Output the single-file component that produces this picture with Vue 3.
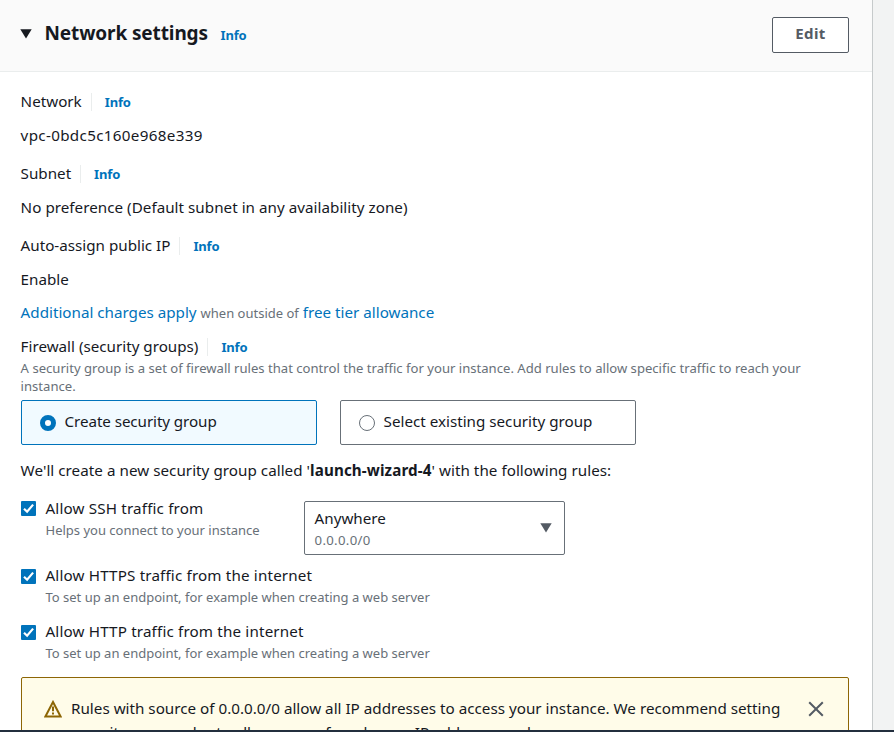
<script setup>
import { ref } from 'vue'

const group = ref('create')
const groups = [
  { id: 'create', label: 'Create security group' },
  { id: 'existing', label: 'Select existing security group' },
]
const webRules = [
  { id: 'https', label: 'Allow HTTPS traffic from the internet' },
  { id: 'http', label: 'Allow HTTP traffic from the internet' },
]
</script>

<template>
  <div class="page">
    <section class="panel">
      <header class="head">
        <svg class="caret" width="12" height="10" viewBox="0 0 12 10"><path d="M.3.3h11.4L6 9.6z" fill="#16191f" /></svg>
        <h2>Network settings</h2>
        <a class="info">Info</a>
        <button class="edit">Edit</button>
      </header>

      <div class="body">
        <div class="label"><span>Network</span><i class="sep"></i><a class="info">Info</a></div>
        <div class="value vpc">vpc-0bdc5c160e968e339</div>
        <div class="label"><span>Subnet</span><i class="sep"></i><a class="info">Info</a></div>
        <div class="value pref">No preference (Default subnet in any availability zone)</div>
        <div class="label"><span>Auto-assign public IP</span><i class="sep"></i><a class="info">Info</a></div>
        <div class="value enable">Enable</div>
        <div class="charges">
          <a>Additional charges apply</a><small>when outside of</small><a>free tier allowance</a>
        </div>
        <div class="label firewall"><span>Firewall (security groups)</span><i class="sep"></i><a class="info">Info</a></div>
        <p class="desc">A security group is a set of firewall rules that control the traffic for your instance. Add rules to allow specific traffic to reach your<br />instance.</p>

        <div class="tiles">
          <div v-for="g in groups" :key="g.id" class="tile" :class="{ on: group === g.id }" @click="group = g.id">
            <span class="radio"></span><span class="tile-label">{{ g.label }}</span>
          </div>
        </div>

        <p class="note">We'll create a new security group called '<b>launch-wizard-4</b>' with the following rules:</p>

        <div class="rule ssh">
          <svg class="check" width="15" height="15" viewBox="0 0 15 15"><rect width="15" height="15" rx="1" fill="#0073bb" /><path d="M3 7.7l3.1 3L12.1 3.6" fill="none" stroke="#fff" stroke-width="2.2" /></svg>
          <div class="rule-text">
            <div class="rule-label">Allow SSH traffic from</div>
            <div class="hint">Helps you connect to your instance</div>
          </div>
          <div class="select">
            <div class="chosen"><div class="any">Anywhere</div><div class="cidr">0.0.0.0/0</div></div>
            <svg width="12" height="10" viewBox="0 0 12 10"><path d="M.3.3h11.4L6 9.6z" fill="#545b64" /></svg>
          </div>
        </div>

        <div v-for="r in webRules" :key="r.id" class="rule web">
          <svg class="check" width="15" height="15" viewBox="0 0 15 15"><rect width="15" height="15" rx="1" fill="#0073bb" /><path d="M3 7.7l3.1 3L12.1 3.6" fill="none" stroke="#fff" stroke-width="2.2" /></svg>
          <div class="rule-text">
            <div class="rule-label">{{ r.label }}</div>
            <div class="hint">To set up an endpoint, for example when creating a web server</div>
          </div>
        </div>

        <div class="alert">
          <svg class="warn" width="18" height="18" viewBox="0 0 18 18" fill="none" stroke="#8d6605">
            <path d="M9 2L16.6 16.6H1.4z" stroke-width="2" />
            <path d="M9 6.4v4.8M9 12.6v2" stroke-width="2" />
          </svg>
          <p>Rules with source of 0.0.0.0/0 allow all IP addresses to access your instance. We recommend setting<br /><span class="second">security group rules to allow access from known IP addresses only.</span></p>
          <svg class="close" width="16" height="16" viewBox="0 0 16 16"><path d="M1.2 1.2l13.6 13.6M14.8 1.2L1.2 14.8" fill="none" stroke="#545b64" stroke-width="2" /></svg>
        </div>
      </div>
    </section>
    <div class="bottom"></div>
  </div>
</template>

<style>
body { margin: 0; overflow: hidden; }
</style>

<style scoped>
* { box-sizing: border-box; }
.page {
  display: flex; flex-direction: column; width: 894px; height: 732px; overflow: hidden;
  background: #f2f3f3; color: #16191f;
  font: 15.2px/22px "Noto Sans", sans-serif;
}
.panel { flex: 1; min-height: 0; width: 873px; overflow: hidden; background: #fff; border-right: 1px solid #c6cacb; }
.bottom { flex: none; height: 2px; background: #232f3e; }
.head {
  display: flex; height: 72px; padding: 17px 23px 0 20px;
  background: #fafafa; border-bottom: 1px solid #eaeded;
}
.caret { margin-top: 12px; }
h2 { margin: 3px 0 0 12.5px; font-size: 19px; line-height: 26px; font-weight: 700; letter-spacing: -.12px; width: 163px; white-space: nowrap; }
.info { color: #0073bb; font-size: 13px; font-weight: 700; letter-spacing: -.15px; }
.head .info { margin: 7px 0 0 13px; }
.edit {
  width: 77px; height: 36px; margin-left: auto; padding: 0 0 4px; color: #545b64; background: #fff;
  border: 1px solid #545b64; border-radius: 2px; font: 700 15px/22px "Noto Sans", sans-serif; letter-spacing: .4px;
}
.body { padding: 18px 23px 0 21px; }
.label { display: flex; align-items: center; height: 22px; margin-left: -.4px; white-space: nowrap; }
.label .info { padding-top: 1px; }
.sep { width: 1px; height: 18px; margin: 2px 13px 0 9px; background: #eaeded; }
.value { height: 22px; margin: 12px 0 16px -.4px; white-space: nowrap; }
.vpc { letter-spacing: .33px; }
.pref { letter-spacing: .03px; }
.enable { margin-bottom: 11px; }
.charges { display: flex; gap: 4px; height: 22px; margin-left: -.4px; white-space: nowrap; color: #687078; }
.charges a { color: #0073bb; }
.charges small { font-size: 13px; padding-top: 1px; }
.firewall { margin-top: 12px; }
.desc { margin: 2px 0 0 -.4px; height: 36px; font-size: 13.1px; line-height: 18px; color: #687078; white-space: nowrap; }
.tiles { display: flex; gap: 23px; margin-top: 5px; }
.tile { display: flex; width: 296px; height: 45px; padding: 9px 0 0 18px; border: 1px solid #687078; border-radius: 2px; white-space: nowrap; }
.tile.on { background: #f1faff; border-color: #0073bb; }
.radio { width: 16px; height: 16px; margin: 5px 8.6px 0 0; border: 1px solid #687078; border-radius: 50%; background: #fff; }
.on .radio { border: 5px solid #0073bb; }
.on .tile-label { letter-spacing: -.08px; }
.note { margin: 14px 0 0 -.4px; white-space: nowrap; letter-spacing: .04px; }
.note b { letter-spacing: .12px; }
.rule { display: flex; }
.check { flex: none; margin: 5px 9.5px 0 0; }
.rule-text { width: 258.5px; white-space: nowrap; }
.rule-label { letter-spacing: .16px; }
.hint { font-size: 13px; line-height: 18px; color: #687078; }
.ssh { margin-top: 16px; height: 67px; }
.ssh .check { margin-top: 4px; }
.ssh .hint { margin-top: 2px; }
.web { height: 56px; }
.web .hint { margin-top: 2px; }
.select {
  display: flex; justify-content: space-between; align-items: center; width: 261px; height: 54px; margin-top: 4px;
  padding: 0 12px 0 9.6px; border: 1px solid #687078; border-radius: 2px;
}
.any { line-height: 22px; }
.cidr { font-size: 13.2px; line-height: 20px; letter-spacing: .3px; color: #687078; position: relative; top: 1px; }
.alert {
  display: flex; height: 90px; margin-top: 1px; padding: 19px 24px 0 22px;
  background: #fffce9; border: 1px solid #8d6605; border-radius: 2px;
}
.warn { flex: none; margin: 3px 9px 0 0; }
.alert p { margin: 0; white-space: nowrap; font-size: 15.22px; line-height: 22px; }
.second { position: relative; top: 2px; letter-spacing: -.07px; }
.close { margin: 4px 0 0 auto; }
</style>
